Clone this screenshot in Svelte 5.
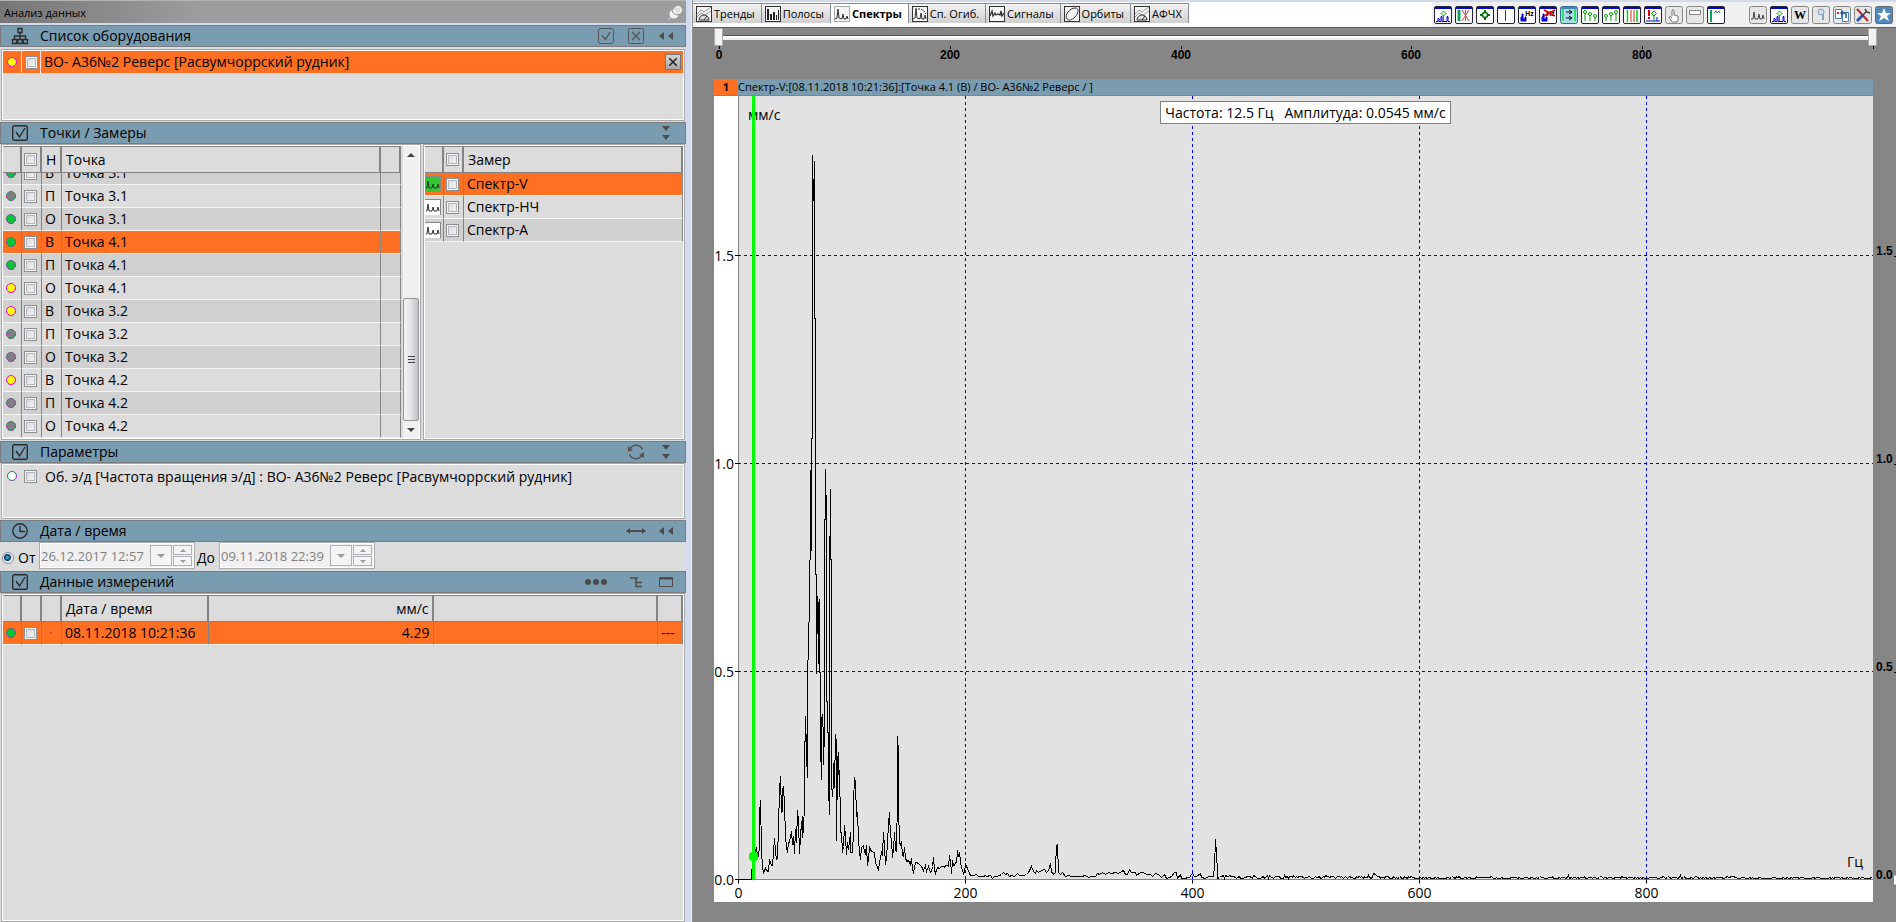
<script>
  let equipmentName = 'ВО- А36№2 Реверс [Расвумчоррский рудник]';

  const points = [
    { kind: 'В', name: 'Точка 3.1', status: 'green' },
    { kind: 'П', name: 'Точка 3.1', status: 'gray' },
    { kind: 'О', name: 'Точка 3.1', status: 'green' },
    { kind: 'В', name: 'Точка 4.1', status: 'green' },
    { kind: 'П', name: 'Точка 4.1', status: 'green' },
    { kind: 'О', name: 'Точка 4.1', status: 'yellow' },
    { kind: 'В', name: 'Точка 3.2', status: 'yellow' },
    { kind: 'П', name: 'Точка 3.2', status: 'gray' },
    { kind: 'О', name: 'Точка 3.2', status: 'gray' },
    { kind: 'В', name: 'Точка 4.2', status: 'yellow' },
    { kind: 'П', name: 'Точка 4.2', status: 'gray' },
    { kind: 'О', name: 'Точка 4.2', status: 'gray' }
  ];
  const measures = ['Спектр-V', 'Спектр-НЧ', 'Спектр-А'];

  let selectedPoint = 3;
  let selectedMeasure = 0;
  let activeTab = 2;

  const fills = { green: '#00c832', gray: '#808080', yellow: '#ffff00', empty: '#ffffff' };

  // Section and header-button glyphs, 16x16
  const glyphs = {
    tree: '<path d="M6 .5h4v4H6zM8 5v3M2.500 11V8h11v3M8 8v3M.5 11.500h4v4h-4zM6 11.500h4v4H6zM11.500 11.500h4v4h-4z" fill="none" stroke="#2c2c2c" stroke-width="1.400"/>',
    check: '<rect x=".7" y=".7" width="14.600" height="14.600" rx="1.500" fill="none" stroke="#2c2c2c" stroke-width="1.400"/><path d="M4 7l3.500 5L13 3" fill="none" stroke="#2c2c2c" stroke-width="1.400"/>',
    clock: '<circle cx="8" cy="8" r="7.200" fill="none" stroke="#2c2c2c" stroke-width="1.400"/><path d="M8 3v5.500h5" fill="none" stroke="#2c2c2c" stroke-width="1.400"/>',
    checkAll: '<rect x=".5" y=".5" width="15" height="15" rx="2" fill="none" stroke="#555"/><path d="M4 7.500l3.500 4L12 4" fill="none" stroke="#555" stroke-width="1.400"/>',
    clearAll: '<rect x=".5" y=".5" width="15" height="15" rx="2" fill="none" stroke="#555"/><path d="M4 4l8 8M12 4l-8 8" fill="none" stroke="#555" stroke-width="1.200"/>',
    back: '<path d="M6 4v8L1 8zM15 4v8l-5-4z" fill="#4c4c4c"/>',
    down: '<path d="M4 1h8L8 6zM4 10h8l-4 5z" fill="#4c4c4c"/>',
    refresh: '<path d="M1.500 6A7 7 0 0 1 14.500 5.500M14.500 10A7 7 0 0 1 1.500 10.500" fill="none" stroke="#555" stroke-width="1.500"/><path d="M0 2v6l5-2zM16 14V8l-5 3z" fill="#555"/>',
    range: '<path d="M-2 8l4-3v2h12V5l4 3-4 3V9H2v2z" fill="#4c4c4c"/>',
    dots: '<circle cx="0" cy="8" r="3" fill="#4c4c4c"/><circle cx="8" cy="8" r="3" fill="#4c4c4c"/><circle cx="16" cy="8" r="3" fill="#4c4c4c"/>',
    levels: '<path d="M2 4h8M8 4v9M8 8.500h6M8 12.500h6" fill="none" stroke="#4c4c4c" stroke-width="1.500"/>',
    window: '<path d="M1.500 3.500h13v9h-13z" fill="none" stroke="#4c4c4c"/><path d="M1 4.500h14" stroke="#4c4c4c" stroke-width="2"/>'
  };

  const tabs = [
    { name: 'Тренды', icon: '<path d="M1 8l4-4 3 2 7-5M1 11l4-4 4 2 6-4" fill="none" stroke="#999"/><path d="M3 14a5 5 0 0 1 10 0zM8 14l3-4" fill="#ddd" stroke="#333"/>' },
    { name: 'Полосы', icon: '<path d="M2 3h2v11H2zM5 8h2v6H5zM8 6h2v8H8zM11 9h1v5h-1zM13 4h1v10h-1z" fill="#222"/>' },
    { name: 'Спектры', icon: '<path d="M1 13l2-1 1-9 1 9 3 1 1-5 1 5 2 0 1-3 1 3" fill="none" stroke="#333"/>' },
    { name: 'Сп. Огиб.', icon: '<path d="M1 13l2-1 1-9 1 9 3 1 1-6 1 6 2 0 1-4 1 4" fill="none" stroke="#333"/><path d="M3 3h6l3 2 2 3" fill="none" stroke="#333" stroke-dasharray="2 1"/>' },
    { name: 'Сигналы', icon: '<path d="M1 10l2-5 1 5 2-3 1 2 2-1 2 1 1-4 1 5 2-3" fill="none" stroke="#333" stroke-width="1.300"/>' },
    { name: 'Орбиты', icon: '<path d="M3 13C0 9 6 2 11 2s3 6 0 9-6 4-8 2z" fill="none" stroke="#333"/>' },
    { name: 'АФЧХ', icon: '<path d="M1 8l4-4 3 2 7-5M1 11l4-4 4 2 6-4" fill="none" stroke="#999"/><path d="M3 14a5 5 0 0 1 10 0zM8 14l3-4" fill="#ddd" stroke="#333"/>' }
  ];

  // Toolbar pictures, 18x18. The first ones share the blue caption strip.
  const frame = '<rect x=".5" y=".5" width="17" height="17" rx="1.500" fill="#fff" stroke="#223"/><path d="M1 1h16v2H1z" fill="#0000d8"/>';
  const soft = '<rect x=".5" y=".5" width="17" height="17" rx="2" fill="#e6e6e6" stroke="#888"/>';
  const peaks = '<path d="M2 15.500h2v-3h1v3h2v-5h1v5h5v-5h1v5h2" fill="none" stroke="#0000d8"/><path d="M9.500 5l2.500 2.500-2.500 2.500L7 7.500z" fill="none" stroke="#00a000"/><path d="M9.500 10v5" stroke="#00a000"/>';
  const tools = [
    { title: 'Курсор', icon: frame + peaks },
    { title: 'Снять курсор', icon: frame + '<path d="M4 4v11" stroke="#10a060" stroke-width="3"/><path d="M7 4l7 11M14 4L7 15" stroke="#d04040"/><path d="M10.500 4v11" stroke="#5080b0"/>' },
    { title: 'Метка', icon: frame + '<path d="M9 4v10M4 9h10" stroke="#087008" stroke-width="2"/><circle cx="9" cy="9" r="2.500" fill="#fff" stroke="#087008" stroke-width="1.500"/>' },
    { title: 'Линия', icon: frame + '<path d="M8.500 4v11" stroke="#d00000"/>' },
    { title: 'Частота', icon: frame + '<path d="M3 15V11h1v-3h1v5h2v-2h1v4z" fill="#0000d8" stroke="#0000d8"/><text x="7" y="10" font-size="7" font-weight="700">Hz</text>' },
    { title: 'Скрыть частоту', icon: frame + '<path d="M3 15V11h1v-3h1v5h2v-2h1v4z" fill="#0000d8" stroke="#0000d8"/><text x="7" y="10" font-size="7" font-weight="700">Hz</text><path d="M5 4l11 6M16 4L5 10" stroke="#e00000" stroke-width="1.500"/>' },
    { title: 'Сдвиг', icon: '<rect x=".5" y=".5" width="17" height="17" rx="2" fill="#a8dcec" stroke="#356a90"/><path d="M1 1h16v2H1z" fill="#4488b0"/><path d="M3 3v12M15 3v12" stroke="#30e060" stroke-width="2"/><path d="M6 6h6M9 4l3 2-3 2M6 12h6M9 10l3 2-3 2" fill="none" stroke="#111"/>' },
    { title: 'Гармоники вниз', icon: frame + '<path d="M4 7v8M9 9v6M14 11v4" stroke="#00a000"/><circle cx="4" cy="6" r="1.500" fill="none" stroke="#00a000"/><circle cx="9" cy="8" r="1.500" fill="none" stroke="#00a000"/><circle cx="14" cy="10" r="1.500" fill="none" stroke="#00a000"/>' },
    { title: 'Гармоники вверх', icon: frame + '<path d="M4 11v4M9 9v6M14 7v8" stroke="#00a000"/><circle cx="4" cy="10" r="1.500" fill="none" stroke="#00a000"/><circle cx="9" cy="8" r="1.500" fill="none" stroke="#00a000"/><circle cx="14" cy="6" r="1.500" fill="none" stroke="#00a000"/>' },
    { title: 'Полоса', icon: frame + '<path d="M4.500 4v12M14 4v12" stroke="#00d020" stroke-width="1.500"/><path d="M8 4v12M11 4v12" stroke="#e02020"/>' },
    { title: 'Предупреждение', icon: frame + '<path d="M5 4v6M5 11v2" stroke="#e00000" stroke-width="2"/><path d="M2 15h14M13 15v-4" stroke="#0000d8"/><path d="M10 5l2.500 2.500L10 10 7.500 7.500zM10 10v5" fill="none" stroke="#00a000"/>' },
    { title: 'Рука', icon: soft + '<path d="M7 10V4.500q1-1.500 2 0V9l4 1v4l-1 2H7l-3-5q1-1.500 3 1" fill="#fff" stroke="#777"/>' },
    { title: 'Панель', icon: soft + '<rect x="3.500" y="4.500" width="11" height="4" fill="#fff" stroke="#888"/>' },
    { title: 'Спад', icon: frame + '<path d="M4 4v12" stroke="#10a060" stroke-width="2"/><path d="M7 7l2-2 1 2 2-2 1 2" fill="none" stroke="#10a060"/>' },
    { title: 'Спектр', gap: true, icon: soft + '<path d="M2 13h2l1-7 1 7h3l1-5 1 5h2l1-4 1 4" fill="none" stroke="#444"/>' },
    { title: 'График', icon: frame + peaks },
    { title: 'Word', icon: soft + '<text x="3" y="13" font-size="12" font-weight="700" font-family="Liberation Serif, serif">W</text>' },
    { title: 'Поиск', icon: soft + '<circle cx="9" cy="6" r="3" fill="#cde" stroke="#8aa0c0"/><path d="M11 8v6" stroke="#8aa0c0" stroke-width="2"/>' },
    { title: 'Копировать', icon: soft + '<path d="M2.500 3.500h6v9h-6z" fill="#fff" stroke="#4a80b0"/><path d="M9.500 6.500h6v9h-6z" fill="#fff" stroke="#4a80b0"/><path d="M4 6h2v2H4z" fill="#e02020"/><path d="M13 12V7H8M10 5L8 7l2 2" fill="none" stroke="#2060a0" stroke-width="1.500"/>' },
    { title: 'Настройки', icon: soft + '<path d="M3 3l11 12" stroke="#c02020" stroke-width="2"/><path d="M9 9l-6 6" stroke="#2858b0" stroke-width="3"/><path d="M8 10l5-5M11 3l2 3 3 1" stroke="#444" fill="none" stroke-width="1.500"/>' },
    { title: 'Избранное', icon: '<rect x=".5" y=".5" width="17" height="17" rx="2" fill="#5088bc" stroke="#666"/><path d="M9 2l2 5h5l-4 3 2 5-5-3-5 3 2-5-4-3h5z" fill="#fff"/>' }
  ];

  // Spectrum samples: frequency bin, level pairs
  const BINS = 3405;
  const LEVELS = 1248;
  const head =
    '0,0 38,0 40,18 44,65 49,70 51,85 53,97 56,70 59,68 62,100 64,195 66,237 69,90 71,35 75,22 80,32 85,28 90,25 92,60 96,52 98,42 102,42 105,80 108,123 111,85 115,60 118,62 121,160 123,268 126,308 129,200 131,205 133,270 135,280 137,225 140,130 143,98 147,80 150,110 153,112 156,130 159,143 162,105 165,130 168,78 171,150 174,110 177,208 180,175 183,78 186,130 189,175 191,125 193,188 195,142 197,235 199,340 201,490 203,340 205,435 207,305 207,600 210,710 213,830 216,1078 216,1228 219,988 219,1324 222,1324 222,2173 225,2036 228,2155 228,1684 231,1684 231,916 234,916 234,617 237,848 240,820 240,648 243,840 243,622 246,620 246,412 249,300 249,480 252,495 255,420 255,345 258,450 258,1080 261,1080 261,1231 264,1080 264,535 267,535 267,440 270,440 270,280 273,195 273,880 276,1171 276,960 279,960 279,290 282,250 285,290 285,345 288,350 288,275 291,435 294,410 294,118 297,370 297,240 300,380 303,280 306,220 306,140 309,140 312,80 314,100 317,163 320,130 324,75 327,110 330,90 335,140 337,80 341,80 344,145 346,230 348,305 351,290 353,190 356,185 358,200 361,120 364,85 367,60 370,95 374,102 378,85 382,78 384,103 388,42 391,60 394,97 398,85 402,85 405,80 409,82 412,50 416,35 420,27 424,50 428,80 431,75 434,140 438,100 441,45 445,65 448,110 451,165 453,202 455,130 459,120 462,65 465,90 468,140 471,90 474,85 476,250 477,430 480,380 480,220 484,110 488,100 490,115 493,72 496,70 498,97 501,65 505,55 510,57 515,45 519,62 522,30 526,22 530,50 535,52 540,48 545,42 550,40 555,28 560,42 565,25 570,38 575,22 578,25 581,40 585,65 588,30 592,18 596,35 602,32 608,40 614,40 618,35 622,42 626,42 630,40 632,73 636,55 638,20 640,18 643,58 646,42 650,45 653,58 656,75 658,86 661,70 664,80 667,55 670,35 674,18 678,25 681,45 684,38 688,32 692,18 696,12 705,12 715,14 720,8 735,8 740,12 745,10 755,12 762,4 768,10 775,10 782,12 788,14 795,22 800,14 806,18 812,10 820,12 828,10 836,18 842,12 855,13 865,15 870,20 875,32 879,40 885,25 890,18 895,28 900,20 910,28 918,30 925,22 930,28 935,48 938,20 942,22 946,15 950,20 952,40 954,98 957,106 960,20 965,16 972,20 980,10 990,12 1000,10 1010,8 1020,10 1030,9 1040,12 1050,6 1060,10 1070,8 1076,18 1082,14 1092,20 1100,14 1110,22 1120,18 1130,20 1140,18 1150,24 1156,26 1162,14 1168,16 1173,30 1180,22 1190,20 1195,12 1205,20 1215,20 1225,14 1235,14 1243,8 1250,18 1260,16 1270,6 1278,14 1285,4 1292,6 1300,8 1307,20 1313,22 1318,4 1326,14 1330,4 1340,4 1346,6 1352,6 1358,14 1362,18 1367,8 1375,8 1385,18 1390,6 1400,4 1410,10 1425,8 1428,40 1431,120 1433,78 1436,20 1438,4';

  const samples = head.split(' ').map((pair) => pair.split(',').map(Number));

  // above 420 Hz there is only low noise with a few small bumps
  const bumps = { 1638: 13, 1906: 19, 1911: 14, 2490: 13, 2790: 9, 2826: 12, 2966: 9 };
  let seed = 7;
  for (let bin = 1442; bin <= BINS; bin += 4) {
    seed = (seed * 1103 + 12345) % 65536;
    let level = 2 + (seed / 65536) * (bin < 2000 ? 9 : bin < 3000 ? 6 : 4);
    for (const at in bumps) {
      if (Math.abs(bin - at) < 3) level = bumps[at];
    }
    samples.push([bin, level]);
  }

  const AXIS_LEFT = 24;
  const AXIS_BOTTOM = 22;
  const MAX_LEVEL = 1.883;

  let chartWidth = 1159;
  let chartHeight = 806;
  let rulerWidth = 1163;

  $: base = chartHeight - AXIS_BOTTOM - 0.5;
  $: toX = (hz) => AXIS_LEFT + 0.5 + Math.round((hz * (chartWidth - AXIS_LEFT)) / 1000);
  $: toY = (value) => base - Math.round((value * base) / MAX_LEVEL);
  $: line = samples.map(([bin, level]) => `${toX((bin / BINS) * 1000)},${toY(level / LEVELS)}`).join(' ');
  $: cursorX = toX(12.9);
</script>

{#snippet glyph(name)}
  <svg class="glyph" width="16" height="16" viewBox="0 0 16 16" aria-hidden="true">{@html glyphs[name]}</svg>
{/snippet}

{#snippet section(icon, title, buttons)}
  <header class="section">
    {@render glyph(icon)}
    <h2>{title}</h2>
    {#each buttons as name}
      <button class="head-button" class:wide={name === 'dots'} aria-label={name}>{@render glyph(name)}</button>
    {/each}
  </header>
{/snippet}

{#snippet dot(status)}
  <svg class="dot" width="10" height="10" viewBox="0 0 10 10" aria-hidden="true">
    <circle cx="5" cy="5" r="4.500" fill={fills[status]} stroke={status === 'yellow' ? '#ff20c0' : '#00b040'} />
    <circle cx="5" cy="5" r="4.500" fill="none" stroke="#e010e0" stroke-dasharray="2 2" />
  </svg>
{/snippet}

{#snippet arrow(up)}
  <svg width="8" height="4" viewBox="0 0 8 4" aria-hidden="true"><path d={up ? 'M0 4h8L4 0z' : 'M0 0h8L4 4z'} fill="currentColor" /></svg>
{/snippet}

{#snippet dateField(label, value)}
  <div class="date-field">
    <input type="text" {value} aria-label={label} disabled />
    <button class="date-drop" aria-label="Календарь" disabled>{@render arrow(false)}</button>
    <div class="spin">
      <button aria-label="Больше" disabled>{@render arrow(true)}</button>
      <button aria-label="Меньше" disabled>{@render arrow(false)}</button>
    </div>
  </div>
{/snippet}

<main class="app">
  <section class="side">
    <div class="title-bar">
      <h1>Анализ данных</h1>
      <button class="pin" aria-label="Закрепить">
        <svg width="14" height="14" viewBox="0 0 14 14">
          <path d="M0 14l4-4" stroke="#ddd" />
          <circle cx="6" cy="8" r="4.500" fill="#f2f2f2" />
          <path d="M4 4q1 5 7 5" stroke="#888" fill="none" />
          <circle cx="10" cy="4" r="3.500" fill="#ddd" stroke="#fff" />
        </svg>
      </button>
    </div>

    {@render section('tree', 'Список оборудования', ['checkAll', 'clearAll', 'back'])}
    <div class="box equipment">
      <div class="equipment-row">
        <span class="cell">{@render dot('yellow')}</span>
        <span class="cell"><input type="checkbox" aria-label={equipmentName} /></span>
        <span class="name">{equipmentName}</span>
        <button class="remove" aria-label="Удалить">
          <svg width="8" height="8" viewBox="0 0 8 8"><path d="M0 0l8 8M8 0L0 8" stroke="#222" stroke-width="1.500" /></svg>
        </button>
      </div>
    </div>

    {@render section('check', 'Точки / Замеры', ['down'])}
    <div class="split">
      <div class="box points">
        <div class="points-grid">
          <table>
            <colgroup><col class="c-dot" /><col class="c-check" /><col class="c-check" /><col /><col class="c-check" /></colgroup>
            <thead>
              <tr>
                <th></th>
                <th class="center"><input type="checkbox" aria-label="Все точки" /></th>
                <th>Н</th>
                <th>Точка</th>
                <th></th>
              </tr>
            </thead>
          </table>
          <div class="points-body">
            <table>
              <colgroup><col class="c-dot" /><col class="c-check" /><col class="c-check" /><col /><col class="c-check" /></colgroup>
              <tbody>
                {#each points as point, i}
                  <tr class:selected={i === selectedPoint} on:click={() => (selectedPoint = i)}>
                    <td class="center">{@render dot(point.status)}</td>
                    <td class="center"><input type="checkbox" aria-label={`${point.name} ${point.kind}`} /></td>
                    <td>{point.kind}</td>
                    <td>{point.name}</td>
                    <td></td>
                  </tr>
                {/each}
              </tbody>
            </table>
          </div>
        </div>
        <div class="scroll">
          <button aria-label="Вверх">{@render arrow(true)}</button>
          <div class="scroll-track"><div class="scroll-thumb"><i></i><i></i><i></i></div></div>
          <button aria-label="Вниз">{@render arrow(false)}</button>
        </div>
      </div>

      <div class="box measures">
        <table>
          <colgroup><col class="c-dot" /><col class="c-check" /><col /></colgroup>
          <thead>
            <tr>
              <th></th>
              <th class="center"><input type="checkbox" aria-label="Все замеры" /></th>
              <th>Замер</th>
            </tr>
          </thead>
          <tbody>
            {#each measures as measure, i}
              <tr class:selected={i === selectedMeasure} on:click={() => (selectedMeasure = i)}>
                <td class="picture">
                  <svg width="16" height="16" viewBox="0 0 16 16">
                    <path d="M0 0h16v16H0z" fill={i === 0 ? '#32c832' : '#fff'} />
                    <path d="M0 .5h16M15.500 0v16" stroke="#888" stroke-width="1" />
                    <path d="M1 12h1l1-7 1 7h3l1-4 1 4h3l1-4 1 4" fill="none" stroke="#333" />
                  </svg>
                </td>
                <td class="center"><input type="checkbox" aria-label={measure} /></td>
                <td>{measure}</td>
              </tr>
            {/each}
          </tbody>
        </table>
      </div>
    </div>

    {@render section('check', 'Параметры', ['refresh', 'down'])}
    <div class="box params">
      <label class="param">
        <span class="cell">{@render dot('empty')}</span>
        <span class="cell"><input type="checkbox" /></span>
        <span>Об. э/д [Частота вращения э/д] : {equipmentName}</span>
      </label>
    </div>

    {@render section('clock', 'Дата / время', ['range', 'back'])}
    <div class="dates">
      <label><input type="radio" name="period" checked /> От</label>
      {@render dateField('От', '26.12.2017 12:57')}
      <span class="to">До</span>
      {@render dateField('До', '09.11.2018 22:39')}
    </div>

    {@render section('check', 'Данные измерений', ['dots', 'levels', 'window'])}
    <div class="box data">
      <table>
        <colgroup>
          <col class="c-dot" /><col class="c-check" /><col class="c-check" /><col class="c-date" /><col /><col /><col class="c-end" />
        </colgroup>
        <thead>
          <tr><th></th><th></th><th></th><th>Дата / время</th><th class="right">мм/с</th><th></th><th></th></tr>
        </thead>
        <tbody>
          <tr class="selected">
            <td class="center">{@render dot('green')}</td>
            <td class="center"><input type="checkbox" aria-label="08.11.2018 10:21:36" /></td>
            <td class="center faint">·</td>
            <td>08.11.2018 10:21:36</td>
            <td class="right">4.29</td>
            <td></td>
            <td>---</td>
          </tr>
        </tbody>
      </table>
    </div>
  </section>

  <div class="splitter"></div>

  <section class="view">
    <div class="top">
      <nav class="tabs">
        {#each tabs as tab, i}
          <button class="tab" class:active={i === activeTab} on:click={() => (activeTab = i)}>
            <svg width="16" height="16" viewBox="0 0 16 16" aria-hidden="true">
              <rect x=".5" y=".5" width="15" height="15" fill="#f4f4f4" stroke={i === activeTab ? '#aaa' : '#333'} />
              {@html tab.icon}
            </svg>
            {tab.name}
          </button>
        {/each}
      </nav>
      <div class="toolbar">
        {#each tools as tool}
          <button class="tool" class:apart={tool.gap} aria-label={tool.title}>
            <svg width="18" height="18" viewBox="0 0 18 18" aria-hidden="true">{@html tool.icon}</svg>
          </button>
        {/each}
      </div>
    </div>

    <div class="stage">
      <div class="ruler" bind:clientWidth={rulerWidth}>
        <div class="slider">
          <input type="range" min="0" max="1000" value="0" aria-label="Начало диапазона" />
          <input type="range" min="0" max="1000" value="1000" aria-label="Конец диапазона" />
        </div>
        <svg class="ruler-scale" width={rulerWidth} height="20">
          {#each [0, 200, 400, 600, 800, 1000] as hz}
            {@const x = Math.round(5 + (hz * (rulerWidth - 9)) / 1000)}
            <path d={`M${x + 0.5} 0v3`} stroke="#000" />
            {#if hz < 1000}
              <text x={x} y="13" text-anchor="middle">{hz}</text>
            {/if}
          {/each}
        </svg>
      </div>

      <div class="chart">
        <div class="chart-title"><b>1</b><span>Спектр-V:[08.11.2018 10:21:36]:[Точка 4.1 (В) / ВО- А36№2 Реверс / ]</span></div>
        <div class="plot" bind:clientWidth={chartWidth} bind:clientHeight={chartHeight}>
          <svg width={chartWidth} height={chartHeight}>
            <rect class="field" x={AXIS_LEFT} y="0" width={chartWidth - AXIS_LEFT} height={base} />
            {#each [0.5, 1, 1.5] as value}
              <path class="grid" d={`M${AXIS_LEFT} ${toY(value)}H${chartWidth}`} />
            {/each}
            {#each [200, 400, 600, 800] as hz}
              <path class="grid" d={`M${toX(hz)} 0V${base}`} />
            {/each}
            <path class="axis" d={`M${AXIS_LEFT + 0.5} 0V${base}H${chartWidth}`} />
            {#each [0, 0.5, 1, 1.5] as value}
              <path class="tick" d={`M${AXIS_LEFT - 3} ${toY(value)}h4`} />
              <text x={AXIS_LEFT - 4} y={toY(value) + 5} text-anchor="end">{value.toFixed(1)}</text>
            {/each}
            {#each [0, 200, 400, 600, 800] as hz}
              <path class="tick" d={`M${toX(hz)} ${base}v4`} />
              <text x={toX(hz)} y={base + 18} text-anchor="middle">{hz}</text>
            {/each}
            <text x="34" y="24">мм/с</text>
            <text x={chartWidth - 10} y={base - 13} text-anchor="end">Гц</text>
            <polyline class="line" points={line} />
            <path class="cursor" d={`M${cursorX} 0V${base}`} />
            <rect class="marker" x={cursorX - 3} y={toY(0.0545) - 3} width="6" height="6" rx="2" />
          </svg>
          <output class="readout">Частота: 12.5 Гц&nbsp;&nbsp; Амплитуда: 0.0545 мм/с</output>
        </div>
      </div>

      <svg class="levels" width="23" height={chartHeight}>
        {#each [0, 0.5, 1, 1.5] as value}
          <text x="3" y={toY(value) - 1}>{value.toFixed(1)}</text>
          <path d={`M21 ${toY(value) + 1}h2`} stroke="#000" />
        {/each}
        <path d={`M21 ${base - 4}h2v9h-2z`} fill="#fff" />
      </svg>
    </div>
  </section>
</main>

<style>
  :global(body) {
    margin: 0;
    font-family: "Open Sans", "Noto Sans", sans-serif;
    font-size: 14px;
    color: #000;
    background: #dcdcdc;
  }

  button {
    padding: 0;
    border: 0;
    background: none;
    font: inherit;
    color: inherit;
  }

  svg {
    display: block;
    flex: none;
  }

  .app {
    display: grid;
    grid-template-columns: minmax(0, 686fr) 7px minmax(0, 1203fr);
    height: 100vh;
    overflow: hidden;
  }

  .side {
    display: flex;
    flex-direction: column;
    min-height: 0;
  }

  .title-bar {
    display: flex;
    justify-content: space-between;
    align-items: center;
    box-sizing: border-box;
    height: 25px;
    padding: 0 4px;
    border-top: 1px solid #b4b4b4;
    border-bottom: 2px solid #d4daee;
    background: linear-gradient(to right, #767676, #9d9d9d 200px);
  }

  h1 {
    margin: 0;
    font-size: 11px;
    font-weight: 400;
    padding-top: 1px;
  }

  .pin {
    margin-top: 2px;
  }

  .section {
    display: flex;
    flex: none;
    align-items: center;
    box-sizing: border-box;
    height: 22px;
    padding: 0 4px 0 11px;
    border: 1px solid #7c7c80;
    background: #7a9cb0;
  }

  h2 {
    flex: 1;
    margin: 0 0 0 12px;
    font-size: 14px;
    line-height: 18px;
    font-weight: 400;
  }

  .glyph {
    overflow: visible;
  }

  .head-button {
    display: flex;
    justify-content: center;
    width: 30px;
  }

  .head-button.wide {
    width: 50px;
  }

  .box {
    box-sizing: border-box;
    margin-left: 1px;
    margin-right: 1px;
    border: 1px solid #a8a8a8;
    box-shadow: inset 0 0 0 1px #fff;
    padding: 1px;
    background: #dcdcdc;
  }

  input[type="checkbox"] {
    appearance: none;
    display: block;
    box-sizing: border-box;
    width: 13px;
    height: 13px;
    margin: 0;
    border: 1px solid #8e8f8f;
    background: linear-gradient(135deg, #d4d8dc, #f6f6f6);
    box-shadow: inset 0 0 0 1px #f4f4f4, inset 0 0 0 2px #b4b8bc;
  }

  .equipment {
    flex: none;
    height: 72px;
    margin-top: 2px;
    margin-bottom: 1px;
  }

  .equipment-row {
    display: flex;
    align-items: center;
    height: 22px;
    background: #ff7022;
  }

  .cell {
    display: flex;
    align-items: center;
    justify-content: center;
    width: 18px;
    flex: none;
  }

  .equipment-row .cell {
    height: 22px;
    border-right: 1px solid #e4e4e4;
  }

  .equipment-row .name {
    flex: 1;
    padding-left: 3px;
    line-height: 20px;
  }

  .remove {
    display: flex;
    align-items: center;
    justify-content: center;
    width: 16px;
    height: 16px;
    margin-right: 2px;
    border: 1px solid #777;
    background: linear-gradient(#d4d4d4, #a8a8a8);
  }

  .split {
    display: grid;
    grid-template-columns: 1fr 262px;
    gap: 2px;
    flex: none;
    height: 296px;
    margin: 0 1px 1px;
  }

  .split .box {
    margin: 0;
  }

  .points {
    display: flex;
    gap: 2px;
    min-height: 0;
  }

  .points-grid {
    flex: 1;
    display: flex;
    flex-direction: column;
    min-height: 0;
  }

  .points-body {
    flex: 1;
    display: flex;
    flex-direction: column;
    justify-content: flex-end;
    overflow: hidden;
  }

  table {
    table-layout: fixed;
    width: 100%;
    border-collapse: separate;
    border-spacing: 0;
  }

  .c-dot {
    width: 19px;
  }

  .c-check {
    width: 20px;
  }

  .c-date {
    width: 147px;
  }

  .c-end {
    width: 25px;
  }

  th,
  td {
    box-sizing: border-box;
    padding: 0 3px;
    border-right: 1px solid #848484;
    font-weight: 400;
    text-align: left;
    white-space: nowrap;
    overflow: hidden;
  }

  th {
    height: 27px;
    padding: 0 4px;
    border-top: 1px solid #848484;
    border-bottom: 1px solid #848484;
    box-shadow: inset -1px 0 #848484;
  }

  td {
    height: 23px;
    border-bottom: 1px solid #f4f4f4;
    line-height: 20px;
  }

  .center {
    padding: 0 4px 0 2px;
    text-align: center;
  }

  .center input,
  .center .dot {
    margin: 0 auto;
  }

  .right {
    text-align: right;
  }

  .faint {
    color: #666;
  }

  .picture {
    padding: 0;
  }

  .points tbody tr:nth-child(odd),
  .measures tbody tr:nth-child(odd) {
    background: #d0d0d0;
  }

  tbody tr.selected,
  .points tbody tr.selected,
  .measures tbody tr.selected {
    background: #ff7022;
  }

  .scroll {
    display: flex;
    flex-direction: column;
    width: 16px;
    background: #f0f0f0;
  }

  .scroll button {
    display: flex;
    align-items: center;
    justify-content: center;
    height: 17px;
    color: #444;
  }

  .scroll-track {
    flex: 1;
    display: flex;
    flex-direction: column;
    justify-content: flex-end;
  }

  .scroll-thumb {
    display: flex;
    flex-direction: column;
    align-items: center;
    justify-content: center;
    gap: 2px;
    box-sizing: border-box;
    height: 123px;
    border: 1px solid #949494;
    border-radius: 2px;
    background: linear-gradient(to right, #f4f4f4, #e4e4e6 50%, #c0c0c6);
  }

  .scroll-thumb i {
    width: 7px;
    height: 1px;
    background: #444;
  }

  .params {
    flex: none;
    height: 56px;
    margin-bottom: 1px;
  }

  .param {
    display: flex;
    align-items: center;
    height: 22px;
    white-space: nowrap;
  }

  .param span:last-child {
    margin-left: 6px;
  }

  .dates {
    display: flex;
    align-items: center;
    flex: none;
    height: 29px;
    padding-left: 2px;
  }

  .dates label {
    display: flex;
    align-items: center;
    gap: 4px;
    width: 37px;
    padding-top: 2px;
  }

  .to {
    width: 22px;
    margin-left: 2px;
    padding-top: 2px;
  }

  input[type="radio"] {
    appearance: none;
    width: 12px;
    height: 12px;
    margin: 0;
    border: 1px solid #8e8f8f;
    border-radius: 50%;
    background: radial-gradient(circle at 45% 45%, #40c0f0, #083868 3px, #e8eef2 4px);
  }

  .date-field {
    display: flex;
    align-items: center;
    box-sizing: border-box;
    width: 156px;
    height: 27px;
    padding-right: 2px;
    margin-bottom: 2px;
    border: 1px solid #abadb3;
    background: #f0f0f0;
    box-shadow: inset 0 0 0 1px #fff;
  }

  .date-field input {
    flex: 1;
    min-width: 0;
    padding: 0 0 0 1px;
    border: 0;
    background: none;
    font: inherit;
    font-size: 13px;
    color: #808080;
  }

  .date-field button {
    display: flex;
    align-items: center;
    justify-content: center;
    box-sizing: border-box;
    border: 1px solid #adb2b5;
    background: #f4f4f4;
    color: #9a9a9a;
  }

  .date-field .date-drop {
    width: 22px;
    height: 21px;
    margin-right: 1px;
  }

  .spin {
    display: flex;
    flex-direction: column;
    gap: 1px;
  }

  .date-field .spin button {
    width: 19px;
    height: 10px;
  }

  .spin svg {
    width: 6px;
    height: 3px;
  }

  .data {
    flex: 1;
  }

  .splitter {
    box-sizing: border-box;
    border-right: 1px solid #8c8c8c;
    background: linear-gradient(to right, #d4daee 5px, #f0f0f0 5px);
  }

  .view {
    display: flex;
    flex-direction: column;
    min-width: 0;
    background: #868686;
  }

  .top {
    display: flex;
    justify-content: space-between;
    flex: none;
    box-sizing: border-box;
    height: 27px;
    border-top: 2px solid #d4daee;
    background: #fff;
  }

  .tabs {
    display: flex;
    padding-top: 1px;
    height: 20px;
    flex: none;
  }

  .tab {
    display: flex;
    align-items: center;
    gap: 2px;
    padding: 0 6px 0 3px;
    border-top: 1px solid #888c94;
    border-right: 1px solid #888c94;
    background: linear-gradient(#f2f2f2, #d0d0d0);
    font-size: 11px;
    white-space: nowrap;
  }

  .tab.active {
    background: #fff;
    font-weight: 700;
  }

  .toolbar {
    display: flex;
    align-items: center;
    gap: 3px;
    padding: 1px 3px 0 2px;
    background: #f0f0f0;
  }

  .tool.apart {
    margin-left: 21px;
  }

  .stage {
    flex: 1;
    display: grid;
    grid-template-columns: minmax(0, 1fr) 23px;
    grid-template-rows: 51px minmax(0, 1fr);
    min-height: 0;
    padding: 0 0 20px 21px;
    border-top: 1px solid #606060;
    box-sizing: border-box;
  }

  /* the right thumb hangs over the chart edge */
  .ruler {
    grid-column: 1 / -1;
    margin-right: 19px;
  }

  .slider {
    display: grid;
    height: 18px;
    background: linear-gradient(transparent 7px, #555 7px, #555 8px, #fff 8px, #e8e8e8 12px, transparent 12px);
  }

  .slider input {
    grid-area: 1 / 1;
    appearance: none;
    width: 100%;
    height: 18px;
    margin: 0;
    background: none;
    pointer-events: none;
  }

  .slider input::-webkit-slider-thumb {
    appearance: none;
    box-sizing: border-box;
    width: 9px;
    height: 18px;
    border: 1px solid #aaa;
    background: #f2f2f2;
    pointer-events: auto;
  }

  .ruler-scale text,
  .levels text {
    font: 700 12px "Liberation Sans", Arial, sans-serif;
  }

  .ruler-scale {
    overflow: visible;
  }

  .chart {
    display: flex;
    flex-direction: column;
    min-width: 0;
    min-height: 0;
    background: #fff;
  }

  .chart-title {
    display: flex;
    flex: none;
    box-sizing: border-box;
    height: 17px;
    border-bottom: 1px solid #848484;
    background: #7a9cb0;
    font-size: 11px;
    line-height: 16px;
    white-space: nowrap;
  }

  .chart-title b {
    width: 24px;
    background: #ff7022;
    text-align: center;
  }

  .plot {
    flex: 1;
    display: grid;
    min-height: 0;
    overflow: hidden;
  }

  .plot > * {
    grid-area: 1 / 1;
  }

  .field {
    fill: #e2e2e2;
  }

  .grid {
    stroke: #0000e0;
    stroke-dasharray: 3 3;
    shape-rendering: crispEdges;
  }

  .axis {
    fill: none;
    stroke: #848484;
    shape-rendering: crispEdges;
  }

  .tick {
    stroke: #000;
  }

  .line {
    fill: none;
    stroke: #000;
    shape-rendering: crispEdges;
  }

  .cursor {
    stroke: #00ff00;
    stroke-width: 3;
  }

  .marker {
    fill: none;
    stroke: #00ff00;
    stroke-width: 3;
  }

  .readout {
    justify-self: center;
    align-self: start;
    margin: 5px 0 0 24px;
    padding: 0 4px;
    border: 1px solid #808080;
    background: #fff;
    line-height: 21px;
    white-space: nowrap;
  }

  .levels {
    align-self: end;
  }
</style>
